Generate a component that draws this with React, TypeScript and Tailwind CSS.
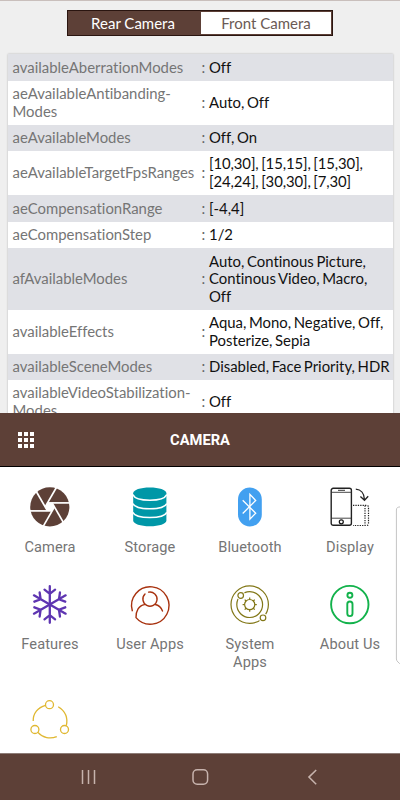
import type { ReactNode } from "react";

type Row = { name: string[]; value: string[]; height: string; tight?: boolean };

const rows: Row[] = [
  { name: ["availableAberrationModes"], value: ["Off"], height: "h-[27px]" },
  { name: ["aeAvailableAntibanding-", "Modes"], value: ["Auto, Off"], height: "h-11" },
  { name: ["aeAvailableModes"], value: ["Off, On"], height: "h-[26px]" },
  { name: ["aeAvailableTargetFpsRanges"], value: ["[10,30], [15,15], [15,30],", "[24,24], [30,30], [7,30]"], height: "h-11", tight: true },
  { name: ["aeCompensationRange"], value: ["[-4,4]"], height: "h-[27px]" },
  { name: ["aeCompensationStep"], value: ["1/2"], height: "h-[26px]" },
  { name: ["afAvailableModes"], value: ["Auto, Continous Picture,", "Continous Video, Macro,", "Off"], height: "h-[62px]" },
  { name: ["availableEffects"], value: ["Aqua, Mono, Negative, Off,", "Posterize, Sepia"], height: "h-11" },
  { name: ["availableSceneModes"], value: ["Disabled, Face Priority, HDR"], height: "h-[26px]" },
  { name: ["availableVideoStabilization-", "Modes"], value: ["Off"], height: "h-11" },
];

const sixths = [0, 60, 120, 180, 240, 300];

function Icon({ children }: { children: ReactNode }) {
  return (
    <svg viewBox="0 0 40 40" className="h-10 w-10 overflow-visible" fill="none">
      {children}
    </svg>
  );
}

const CameraIcon = () => (
  <Icon>
    <circle cx="19.800" cy="19.900" r="19.600" fill="#5d4037" />
    <path d="M17.500 15.900h4.600l2.300 4-2.300 4h-4.600l-2.300-4z" fill="#fff" />
    {sixths.map((a) => (
      <path key={a} transform={`rotate(${a} 19.800 19.900)`} d="M17.500 15.900H40.500" stroke="#fff" strokeWidth="1.700" />
    ))}
  </Icon>
);

const StorageIcon = () => (
  <Icon>
    <path d="M3.2 6.2C3.2 2.8 10.5.4 19.8.4s16.6 2.4 16.6 5.8v27.2c0 3.4-7.3 5.8-16.6 5.8S3.2 36.800 3.200 33.400z" fill="#0097a7" />
    <path d="M2.800 7.600C4.500 11.200 11 13.200 19.800 13.200s15.300-2 17-5.600M2.800 16.600c1.700 3.600 8.200 5.200 17 5.200s15.300-1.600 17-5.200M2.800 25.400c1.700 3.600 8.200 5.200 17 5.200s15.300-1.600 17-5.200" stroke="#fff" strokeWidth="1.500" />
  </Icon>
);

const BluetoothIcon = () => (
  <Icon>
    <rect x="8" y=".6" width="23.800" height="38.800" rx="11.900" fill="#42a0f0" />
    <path d="M12.700 13.200 25.700 26.200 19.900 32.100V7.400l5.800 6.100-13 13" stroke="#fff" strokeWidth="1.300" />
  </Icon>
);

const DisplayIcon = () => (
  <Icon>
    <rect x="1.200" y="1.300" width="20.200" height="37" rx="2" stroke="#222" strokeWidth="1.400" />
    <path d="M1.200 5.300h20.200M1.200 31.200h20.200" stroke="#333" strokeWidth=".9" />
    <path d="M8 3.300h7" stroke="#333" strokeWidth="1" />
    <circle cx="11.300" cy="34.800" r="2" stroke="#111" strokeWidth="1.200" />
    <path d="M23 18.400h13.500q2 0 2 2v16.100q0 2-2 2H23M35 18.500v20" stroke="#222" strokeWidth="1.200" strokeDasharray="1.300 1.100" />
    <path d="M25.800 2.200c5 .3 8.500 4.200 8.700 10.500M30.400 9.500l4.100 3.800 3.700-4" stroke="#222" strokeWidth="1.300" />
  </Icon>
);

const FeaturesIcon = () => (
  <Icon>
    {sixths.map((a) => (
      <path key={a} transform={`rotate(${a} 19.800 19.500)`} d="M19.800 19.500V1.200M14.500 4.700l5.300 4.200 5.300-4.200" stroke="#5e35b1" strokeWidth="2.300" strokeLinecap="round" />
    ))}
  </Icon>
);

const UserIcon = () => (
  <Icon>
    <g stroke="#a8320f" strokeWidth="1.400" strokeLinecap="round">
      <path d="M2.300 25.700A18.700 18.700 0 1 1 6 32.600C5.800 26.500 8.500 20.600 14.500 19.600" />
      <path d="M15 9A7.100 7.100 0 1 0 18.600 7.100M25.200 19.500c3.700.7 6 3 7.300 6.500" />
    </g>
  </Icon>
);

const SystemIcon = () => (
  <Icon>
    <circle cx="19.700" cy="19.600" r="18.700" stroke="#827717" strokeWidth="1.200" />
    <circle cx="19.700" cy="19.600" r="12.900" stroke="#827717" strokeWidth="1.200" />
    <circle cx="10.700" cy="10.500" r="4.500" fill="#fff" />
    <circle cx="33" cy="32.800" r="4.500" fill="#fff" />
    <g stroke="#827717" strokeWidth="1.200">
      <circle cx="10.700" cy="10.500" r="2.800" />
      <circle cx="33" cy="32.800" r="2.800" />
      <circle cx="19.700" cy="19.600" r="5.100" />
      {[0, 45, 90, 135, 180, 225, 270, 315].map((a) => (
        <path key={a} transform={`rotate(${a} 19.700 19.600)`} d="M19.700 14.500v-2" />
      ))}
    </g>
  </Icon>
);

const AboutIcon = () => (
  <Icon>
    <g stroke="#12b24b" strokeWidth="1.900">
      <circle cx="19.800" cy="19.600" r="18.700" />
      <circle cx="19.900" cy="10.200" r="2.500" />
      <rect x="17.300" y="16.500" width="5.200" height="14.600" rx="2.600" />
    </g>
  </Icon>
);

const ShareIcon = () => (
  <Icon>
    <g stroke="#e0b832" strokeWidth="1.300">
      <circle cx="19.500" cy="4.700" r="4" />
      <circle cx="4.900" cy="29.500" r="4" />
      <circle cx="34.500" cy="29.500" r="4" />
      <path d="M15.500 5.300C7.700 7.300 3 13.800 3.200 20.900M28.200 6.700c7.300 4.500 9.800 11.600 8.100 19M7.900 32.400c4.900 5.600 12.300 6.900 18.900 4.200" />
    </g>
  </Icon>
);

function MenuItem({ icon, label }: { icon: ReactNode; label?: string[] }) {
  return (
    <div className="flex flex-col items-center">
      {icon}
      {label && (
        <div className="mt-[11.500px] text-center text-[14.600px] leading-[17.600px] tracking-[0.1px] text-[#757575]">
          {label.map((line) => (
            <div key={line}>{line}</div>
          ))}
        </div>
      )}
    </div>
  );
}

export default function App() {
  return (
    <div className="relative flex h-[800px] w-[400px] flex-col overflow-hidden bg-white font-['Roboto',sans-serif]">
      <section className="h-[413px] shrink-0 overflow-hidden border-t border-[#c9bfbc] bg-[#efefef] font-['Lato',sans-serif] [font-variant-ligatures:none]">
        <div className="mx-auto mt-[9px] flex h-[26px] w-[266px] border border-[#2a1510] bg-white text-[15px] leading-6">
          <div className="w-[133px] bg-[#5d4037] pr-[3px] text-center text-white">Rear Camera</div>
          <div className="flex-1 border border-l-0 border-[#5d4037] text-center leading-[22px] text-[#6b5a55]">Front Camera</div>
        </div>
        <div className="mx-auto mt-[18px] w-[385px] bg-white text-[14.900px] leading-[17.700px] shadow-[0_0_2px_rgba(0,0,0,0.25)]">
          {rows.map((row, i) => (
            <div key={row.name[0]} className={`flex items-center pl-[5px] pt-[0.4px] ${row.height} ${i % 2 ? "bg-white" : "bg-[#e0e1e6]"}`}>
              <div className="w-[189px] shrink-0 text-[#757575]">
                {row.name.map((line) => (
                  <div key={line} className="whitespace-nowrap">{line}</div>
                ))}
              </div>
              <div className="w-[7.500px] shrink-0 text-[#666]">:</div>
              <div className={`text-[#111] [word-spacing:-1.200px] ${row.tight ? "tracking-[-0.1px]" : ""}`}>
                {row.value.map((line) => (
                  <div key={line} className="whitespace-nowrap">{line}</div>
                ))}
              </div>
            </div>
          ))}
        </div>
      </section>

      <header className="relative flex h-[54px] shrink-0 items-center justify-center border-b border-black bg-[#5d4037]">
        <div className="absolute left-[18px] top-[19px] grid grid-cols-3 gap-[2px]">
          {Array.from({ length: 9 }, (_, i) => (
            <span key={i} className="h-1 w-1 bg-white" />
          ))}
        </div>
        <h1 className="pt-px text-[14.700px] font-bold text-white">CAMERA</h1>
      </header>

      <main className="grid h-[286px] shrink-0 grid-cols-4 grid-rows-[97.600px_115.400px_1fr] overflow-hidden pt-5">
        <MenuItem icon={<CameraIcon />} label={["Camera"]} />
        <MenuItem icon={<StorageIcon />} label={["Storage"]} />
        <MenuItem icon={<BluetoothIcon />} label={["Bluetooth"]} />
        <MenuItem icon={<DisplayIcon />} label={["Display"]} />
        <MenuItem icon={<FeaturesIcon />} label={["Features"]} />
        <MenuItem icon={<UserIcon />} label={["User Apps"]} />
        <MenuItem icon={<SystemIcon />} label={["System", "Apps"]} />
        <MenuItem icon={<AboutIcon />} label={["About Us"]} />
        <MenuItem icon={<ShareIcon />} />
      </main>

      <svg viewBox="0 0 5 160" className="absolute right-0 top-[506px] h-[160px] w-[5px]" fill="#fff">
        <path d="M6 .8C2.500 1 1.400 1.700 1.400 4v149c0 2.500 2.600 3.500 4.600 6" stroke="#c4c4c4" strokeWidth="1" />
      </svg>

      <nav className="h-[47px] shrink-0 border-t border-[#8d7c77] bg-[#5d4037]">
        <svg viewBox="0 0 400 46" className="h-[46px] w-[400px]" fill="none" stroke="#c7b3ad" strokeWidth="1.500">
          <path d="M82.500 16v14M88.500 16v14M94.500 16v14" />
          <rect x="193" y="15.700" width="14.600" height="14.600" rx="4.200" />
          <path d="m316.200 16-7.300 7.100 7.300 7.100" />
        </svg>
      </nav>
    </div>
  );
}
